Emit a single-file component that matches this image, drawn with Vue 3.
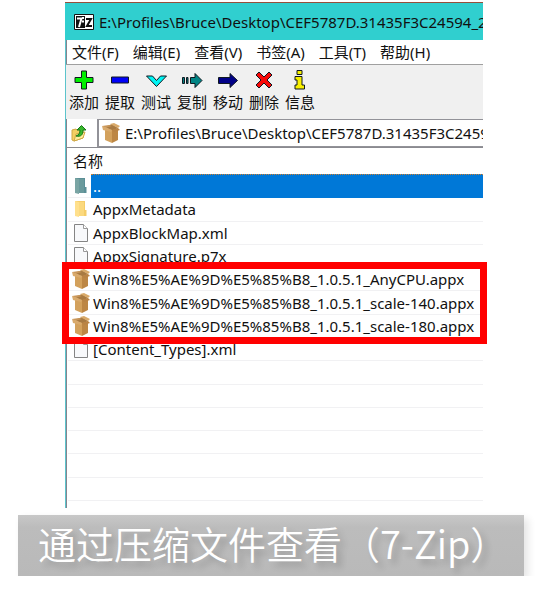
<script setup>
const menus = ['文件(F)', '编辑(E)', '查看(V)', '书签(A)', '工具(T)', '帮助(H)']

const tools = [
  { label: '添加', color: '#00f000', path: 'M8.500 2h5v6.500H20v5h-6.500V20h-5v-6.500H2v-5h6.500z' },
  { label: '提取', color: '#0000f8', path: 'M2.500 8h17v6h-17z' },
  { label: '测试', color: '#00f4f4', path: 'M1.500 7h6l4 4.500 4-4.500h6L11.500 17.500z' },
  { label: '复制', color: '#008484', path: 'M1.500 8.500h2v6h-2zM5.500 8.500h1.500v6H5.500zM9.500 8.500H14V4.500L21 11.500 14 18.500v-4H9.500z' },
  { label: '移动', color: '#000088', path: 'M1.500 8.500H13v-4L20.500 11.500 13 18.500v-4H1.500z' },
  { label: '删除', color: '#f80808', path: 'M3 6l3-3 5 5L16 3l3 3-5 5 5 5-3 3-5-5-5 5-3-3 5-5z' },
  { label: '信息', color: '#f8f000', path: 'M8 1.500h5v4H8zM6 7.500h7v8.500h2.500v4H6v-4h2v-5H6z' },
]

const rows = [
  { icon: 'folder', name: '..', selected: true },
  { icon: 'folder', name: 'AppxMetadata' },
  { icon: 'file', name: 'AppxBlockMap.xml' },
  { icon: 'file', name: 'AppxSignature.p7x' },
  { icon: 'box', name: 'Win8%E5%AE%9D%E5%85%B8_1.0.5.1_AnyCPU.appx' },
  { icon: 'box', name: 'Win8%E5%AE%9D%E5%85%B8_1.0.5.1_scale-140.appx' },
  { icon: 'box', name: 'Win8%E5%AE%9D%E5%85%B8_1.0.5.1_scale-180.appx' },
  { icon: 'file', name: '[Content_Types].xml' },
]
const emptyRows = 6
</script>

<template>
  <svg class="defs" aria-hidden="true">
    <symbol id="folder" viewBox="0 0 18 20">
      <path fill="#f5cd68" d="M3 2h10v9h1.500v6H3z" />
      <path fill="#ffe08c" d="M3 2l4 1v15l-4-1z" />
      <path fill="#fbd97e" d="M7 3h5v14H7z" />
    </symbol>
    <symbol id="folder-selected" viewBox="0 0 18 20">
      <path fill="#5b8f96" d="M3 2h10v9h1.500v6H3z" />
      <path fill="#7aa5a4" d="M3 2l4 1v15l-4-1z" />
      <path fill="#6a9a9c" d="M7 3h5v14H7z" />
    </symbol>
    <symbol id="file" viewBox="0 0 18 20">
      <path fill="#f8f9fb" stroke="#858585" d="M2.500 1.500h9l4 4v13h-13z" />
      <path fill="#fff" stroke="#9a9a9a" d="M11.500 1.500v4h4" />
    </symbol>
    <symbol id="box" viewBox="0 0 18 20">
      <path fill="#a87a42" d="M3 4l7-3 6 4-6 3z" />
      <path fill="#d3a15c" d="M3 5l7 2v13l-7-3z" />
      <path fill="#bd8745" d="M10 7l6-2v12l-6 3z" />
      <path fill="#c8965a" d="M0 3l7-1 3 1-7 2z" />
      <path fill="#d9aa6a" d="M8 1l4-1 6 3-2 2z" />
      <path fill="#d9aa6c" d="M3 4l7 3-1 2-8-2-1-4z" />
      <path fill="#b98345" d="M10 7l6-2 2 2-6 2z" />
    </symbol>
  </svg>

  <main class="page">
    <section class="window">
      <header class="titlebar">
        <svg class="logo" viewBox="0 0 20 16" aria-hidden="true">
          <path fill="#fff" stroke="#111" d="M.5.5h19v15H.5z" />
          <path fill="#111" d="M2 2h9v12H2z" />
          <path fill="none" stroke="#fff" stroke-width="2" d="M3 4.500h4.500L5 13M9 3v2M9 6.500v2" />
          <path fill="none" stroke="#111" stroke-width="2" d="M12 5h5l-4 7h5" />
        </svg>
        <span class="clip">E:\Profiles\Bruce\Desktop\CEF5787D.31435F3C24594_2</span>
      </header>

      <div class="body">
        <nav class="menubar">
          <button v-for="menu in menus" :key="menu" type="button">{{ menu }}</button>
        </nav>

        <div class="toolbar">
          <button v-for="tool in tools" :key="tool.label" type="button">
            <svg viewBox="0 0 22 22" aria-hidden="true">
              <path :d="tool.path" :fill="tool.color" stroke="#101820" />
            </svg>
            <span>{{ tool.label }}</span>
          </button>
        </div>

        <div class="address">
          <button class="up" type="button" aria-label="向上">
            <svg viewBox="0 0 18 18" aria-hidden="true">
              <path fill="#f3cf62" stroke="#d0a845" d="M2 6l4-1 1 1 6-1v9l-9 3-2-1z" />
              <path fill="#ffec9c" stroke="#d0a845" d="M4 17l2-7 9-2-2 6z" />
              <path fill="#38b82c" stroke="#187818" d="M6 12c3-1 4-3 4-6H7l4.500-4.500L16 6h-3c0 5-2 7-7 6z" />
            </svg>
          </button>
          <div class="field">
            <svg viewBox="0 0 18 20" aria-hidden="true"><use href="#box" /></svg>
            <input aria-label="路径" value="E:\Profiles\Bruce\Desktop\CEF5787D.31435F3C24594_2" />
          </div>
        </div>

        <table class="files">
          <thead>
            <tr><th scope="col" colspan="2">名称</th></tr>
          </thead>
          <tbody>
            <tr v-for="row in rows" :key="row.name" :class="{ selected: row.selected }">
              <td class="icon">
                <svg viewBox="0 0 18 20" aria-hidden="true">
                  <use :href="row.selected ? '#folder-selected' : '#' + row.icon" />
                </svg>
              </td>
              <td class="name">{{ row.name }}</td>
            </tr>
            <tr v-for="n in emptyRows" :key="n"><td colspan="2"></td></tr>
          </tbody>
        </table>
      </div>
      <div class="highlight"></div>
    </section>

    <p class="caption">通过压缩文件查看（7-Zip）</p>
  </main>
</template>

<style>
body {
  margin: 0;
  background: #fff;
}
</style>

<style scoped>
.defs {
  position: absolute;
  width: 0;
  height: 0;
}
.page {
  padding: 2px 27px 0 18px;
  font: 15px/22px "Noto Sans", "Noto Sans CJK SC", sans-serif;
  color: #111;
}
button {
  margin: 0;
  padding: 0;
  border: 0;
  background: none;
  color: inherit;
  font: inherit;
}
.window {
  position: relative;
  margin: 0 41px 0 47px;
}
.titlebar {
  display: flex;
  align-items: center;
  gap: 5px;
  height: 37px;
  padding-left: 9px;
  border-top: 1px solid #96503c;
  background: #30cfcf;
}
.logo {
  flex: none;
  width: 20px;
  height: 16px;
}
.clip {
  flex: 1;
  min-width: 0;
  overflow: hidden;
  white-space: nowrap;
}
.body {
  padding-bottom: 7px;
  border-left: 1px solid #5cc4cc;
  box-shadow: inset 1px 0 #85858f;
}
.menubar {
  display: flex;
  gap: 14px;
  height: 24px;
  padding-left: 6px;
  border-bottom: 1px solid #a0a0a0;
  white-space: nowrap;
}
.toolbar {
  display: flex;
  height: 54px;
  padding-top: 4px;
  box-sizing: border-box;
  background: #f0f0f0;
}
.toolbar button {
  display: flex;
  flex-direction: column;
  align-items: center;
  width: 36px;
}
.toolbar svg {
  width: 22px;
  height: 22px;
}
.address {
  display: flex;
  height: 29px;
  border-bottom: 1px solid #8a8a90;
  box-sizing: border-box;
}
.up {
  display: grid;
  place-items: center;
  width: 31px;
  padding-right: 6px;
}
.up svg {
  width: 18px;
  height: 18px;
}
.field {
  display: flex;
  flex: 1;
  align-items: center;
  gap: 5px;
  min-width: 0;
  padding-left: 3px;
  border: 2px solid #929298;
  border-width: 1px 0 1px 2px;
}
.field svg {
  flex: none;
  width: 18px;
  height: 20px;
}
.field input {
  flex: 1;
  min-width: 0;
  padding: 0;
  border: 0;
  outline: 0;
  background: none;
  color: inherit;
  font: inherit;
}
.files {
  width: 100%;
  height: 353px;
  padding-left: 2px;
  border-spacing: 0;
}
.files th {
  height: 26px;
  padding: 0 0 0 5px;
  text-align: left;
  font-weight: 400;
}
.files td {
  height: 22px;
  padding: 0;
  border-bottom: 1px solid #f1f1f3;
  line-height: 20px;
}
.files .icon {
  width: 23px;
}
.files .icon svg {
  display: block;
  width: 18px;
  height: 20px;
  margin-left: 4px;
}
.files .name {
  padding-left: 2px;
  white-space: nowrap;
}
.files .selected .name {
  border-top: 1px dotted #d08030;
  border-bottom-color: #0078d7;
  background: #0078d7;
  color: #fff;
}
.highlight {
  position: absolute;
  top: 260px;
  left: -3px;
  right: -4px;
  box-sizing: border-box;
  height: 82px;
  border: 7px solid #f00;
}
.caption {
  margin: 7px 0 0;
  padding: 0 20px 6px;
  background: linear-gradient(#c8c8c8, #bcbcbc 20%, #b9b9b9);
  box-shadow: 4px 4px 8px #0000001c;
  color: #fff;
  font: 350 38px/55px "Noto Sans CJK SC", sans-serif;
  text-shadow: 5px 5px 6px #00000030;
  white-space: nowrap;
}
</style>
